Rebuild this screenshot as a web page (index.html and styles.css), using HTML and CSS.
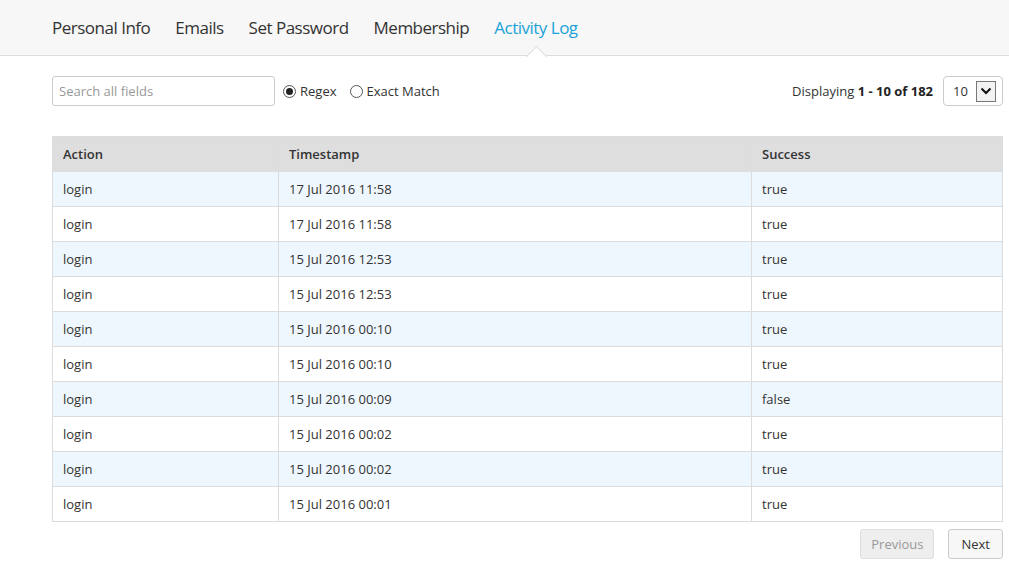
FILE: index.html
```html
<!DOCTYPE html>
<html>
<head>
<meta charset="utf-8">
<link rel="stylesheet" href="styles.css">
</head>
<body>
<nav class="tabs">
  <a class="tab">Personal Info</a>
  <a class="tab">Emails</a>
  <a class="tab">Set Password</a>
  <a class="tab">Membership</a>
  <a class="tab active">Activity Log</a>
</nav>
<main class="content">
  <div class="toolbar">
    <input class="search" type="text" placeholder="Search all fields">
    <label class="radio"><span class="dot checked"></span>Regex</label>
    <label class="radio"><span class="dot"></span>Exact Match</label>
    <div class="spacer"></div>
    <div class="count">Displaying <b>1 - 10 of 182</b></div>
    <div class="select"><span class="val">10</span><span class="arrow"><svg width="12" height="8" viewBox="0 0 12 8"><path d="M1.5 1.5 L6 6 L10.5 1.5" fill="none" stroke="#111" stroke-width="2"/></svg></span></div>
  </div>
  <table class="grid">
    <thead>
      <tr><th class="c1">Action</th><th class="c2">Timestamp</th><th>Success</th></tr>
    </thead>
    <tbody>
      <tr><td>login</td><td>17 Jul 2016 11:58</td><td>true</td></tr>
      <tr><td>login</td><td>17 Jul 2016 11:58</td><td>true</td></tr>
      <tr><td>login</td><td>15 Jul 2016 12:53</td><td>true</td></tr>
      <tr><td>login</td><td>15 Jul 2016 12:53</td><td>true</td></tr>
      <tr><td>login</td><td>15 Jul 2016 00:10</td><td>true</td></tr>
      <tr><td>login</td><td>15 Jul 2016 00:10</td><td>true</td></tr>
      <tr><td>login</td><td>15 Jul 2016 00:09</td><td>false</td></tr>
      <tr><td>login</td><td>15 Jul 2016 00:02</td><td>true</td></tr>
      <tr><td>login</td><td>15 Jul 2016 00:02</td><td>true</td></tr>
      <tr><td>login</td><td>15 Jul 2016 00:01</td><td>true</td></tr>
    </tbody>
  </table>
  <div class="pager">
    <button class="btn disabled">Previous</button>
    <button class="btn">Next</button>
  </div>
</main>
</body>
</html>
```
FILE: styles.css
```css
* { box-sizing: border-box; }
body {
  margin: 0;
  font-family: "Open Sans", "Noto Sans", sans-serif;
  color: #333;
  background: #fff;
}
.tabs {
  display: flex;
  gap: 25px;
  height: 56px;
  padding: 0 52px;
  background: #f7f7f7;
  border-bottom: 1px solid #dcdcdc;
  align-items: center;
}
.tab {
  font-size: 17px;
  color: #333;
  position: relative;
  letter-spacing: -0.5px;
  line-height: 56px;
  height: 56px;
}
.tab.active { color: #1aa3d9; }
.tab.active::after {
  content: "";
  position: absolute;
  left: 50%;
  bottom: -1px;
  width: 14px;
  height: 14px;
  margin-left: -7px;
  transform: translateY(7px) rotate(45deg);
  background: #fff;
  border-left: 1px solid #dcdcdc;
  border-top: 1px solid #dcdcdc;
}
.content { padding: 20px 6px 0 52px; }
.toolbar {
  display: flex;
  align-items: center;
  height: 30px;
  font-size: 13px;
}
.search {
  width: 223px;
  height: 30px;
  border: 1px solid #ccc;
  border-radius: 3px;
  padding: 0 6px;
  font: inherit;
  font-size: 13px;
  margin-right: 8px;
}
.search::placeholder { color: #999; }
.radio {
  display: flex;
  align-items: center;
  gap: 4px;
  margin-right: 13px;
  color: #333;
}
.dot {
  width: 13px;
  height: 13px;
  border: 1px solid #555;
  border-radius: 50%;
  display: inline-flex;
  align-items: center;
  justify-content: center;
}
.dot.checked::after {
  content: "";
  width: 7px;
  height: 7px;
  border-radius: 50%;
  background: #222;
}
.spacer { flex: 1; }
.count { margin-right: 10px; }
.count b { color: #222; }
.select {
  width: 60px;
  height: 30px;
  border: 1px solid #ccc;
  border-radius: 4px;
  display: flex;
  align-items: center;
  padding: 0 6px 0 9px;
  justify-content: space-between;
}
.arrow {
  width: 20px;
  height: 21px;
  border: 1px solid #777;
  background: #f3f3f3;
  display: flex;
  align-items: center;
  justify-content: center;
}
.grid {
  margin-top: 30px;
  width: 951px;
  border-collapse: collapse;
  font-size: 13px;
  color: #333;
}
.grid th, .grid td {
  border: 1px solid #dcdcdc;
  height: 35px;
  padding: 0 10px;
  text-align: left;
}
.grid th {
  background: #dedede;
  font-weight: 600;
  color: #333;
}
.grid .c1 { width: 226px; }
.grid .c2 { width: 473px; }
.grid tbody tr:nth-child(odd) td { background: #eff7fe; }
.pager {
  display: flex;
  justify-content: flex-end;
  gap: 14px;
  margin-top: 7px;
  width: 951px;
}
.btn {
  height: 30px;
  padding: 0 12px;
  font: inherit;
  font-size: 13px;
  color: #333;
  background: #f7f7f7;
  border: 1px solid #ccc;
  border-radius: 3px;
}
.btn.disabled { color: #999; background: #eee; border-color: #ddd; padding: 0 10px; }
```
